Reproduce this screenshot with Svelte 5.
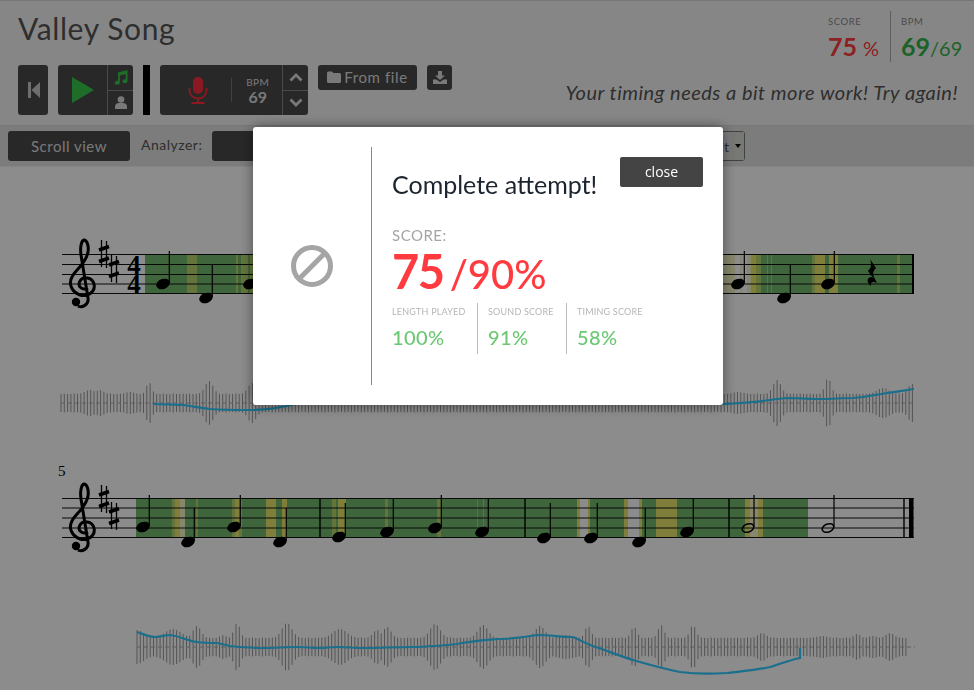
<script>
  const stats = [
    { label: 'LENGTH PLAYED', value: '100%' },
    { label: 'SOUND SCORE', value: '91%' },
    { label: 'TIMING SCORE', value: '58%' }
  ];

  const GREEN = '#73b86d', YEL = '#e8e86c', MID = '#b8d46c', PALE = '#f6f6c8';

  // [x, width, colour]
  const stripes1 = [
    [187, 10, MID], [236, 2, MID], [241, 7, MID], [250, 3, MID],
    [723, 12, PALE], [735, 5, '#ffffff'], [740, 2, PALE], [742, 5, '#ffffff'], [747, 4, PALE], [751, 5, YEL], [756, 5, MID],
    [767, 1, MID], [771, 1, MID], [812, 3, MID], [815, 10, YEL], [829, 9, YEL], [897, 3, MID]
  ];
  const stripes2 = [
    [172, 3, MID], [175, 5, YEL], [180, 5, PALE], [196, 2, MID], [232, 3, MID], [235, 4, YEL], [239, 3, MID],
    [266, 10, YEL], [282, 5, YEL], [332, 4, MID], [338, 8, YEL], [385, 3, MID], [437, 4, MID], [477, 1, MID], [483, 1, MID],
    [577, 3, YEL], [580, 8, '#ffffff'], [588, 2, YEL], [624, 4, YEL], [628, 11, '#ffffff'], [639, 3, YEL],
    [656, 21, YEL], [745, 18, YEL], [750, 8, PALE]
  ];

  // [head x, head y, stem top]
  const notes1 = [[163, 284, 251], [206, 298, 265], [250, 284, 251], [738, 284, 251], [784, 298, 265], [828, 284, 251]];
  const notes2 = [
    [143, 527, 495], [188, 542, 508], [234, 527, 495], [280, 542, 508], [339, 537, 503], [387, 532, 499],
    [435, 528, 495], [482, 532, 499], [544, 538, 503], [591, 538, 503], [639, 542, 508], [687, 532, 498]
  ];
  const halfNotes = [[748, 528, 495], [828, 528, 495]];
  const bars2 = [320, 525, 729];

  function wave(from, to, base, peaks) {
    const out = [];
    for (let x = from; x <= to; x += 3.3) {
      let a = base + Math.sin(x * 0.7) * 0.5;
      for (const [px, amp, w] of peaks) {
        a = Math.max(a, base + (amp - base) * Math.exp(-((x - px) ** 2) / (2 * w * w)));
      }
      out.push({ x: x.toFixed(1), a: a.toFixed(1) });
    }
    return out;
  }

  const wave1 = wave(61, 915, 9, [[90, 13, 5], [100, 13, 4], [130, 11, 4], [149, 21, 2.5], [209, 22, 4], [252, 20, 4],
    [738, 11, 5], [777, 23, 4], [828, 25, 3], [883, 15, 6], [912, 19, 4]]);
  const wave2 = wave(137, 908, 9, [[137, 17, 7], [173, 18, 8], [197, 21, 4], [223, 12, 3], [237, 24, 3], [287, 24, 5], [340, 18, 7],
    [377, 17, 4], [387, 20, 4], [435, 23, 5], [483, 22, 5], [540, 21, 5], [566, 12, 7], [588, 21, 3], [634, 20, 3],
    [661, 22, 3], [693, 22, 3], [762, 14, 4], [822, 11, 5], [857, 13, 3], [873, 11, 4], [890, 14, 4]]);

  const pitch1 = 'M153 404 C165 404.5 175 404.5 183 405 C192 406 200 408 210 409 C225 410 240 410 250 410 C265 410 280 408 295 404 L720 404 C730 404 742 403 753 402 C765 401 775 399 787 398 C800 398 810 399 820 399 C832 399 842 398 853 398 C865 397 875 395 887 393 C897 392 905 390 914 389';
  const pitch2 = 'M137 632 C143 634 149 637 155 637 C161 637 165 635 170 635 C180 636 187 641 197 642 C205 643 211 643 217 643 C222 644 226 645 230 646 C240 647 252 648 263 648 C275 648 286 647 297 647 C305 647 312 648 320 648 C326 648 331 647 337 647 C346 647 354 648 363 648 C380 648 396 647 413 647 C419 647 424 647 430 646 C440 646 448 645 457 644 C470 641 485 640 497 639 C508 639 520 638 537 635 C550 635 562 637 573 637 C580 640 587 644 593 646 C608 651 620 656 633 660 C650 665 665 669 680 672 C695 674 712 674 727 673 C743 671 757 670 770 667 C780 664 790 660 800 658 L800 648';
</script>

<div class="page">
  <header class="top">
    <div class="top-left">
      <h1 class="title">Valley Song</h1>
      <div class="controls">
        <div class="btn skip">
          <svg width="12" height="16" viewBox="0 0 12 16"><path d="M0 0h3v16H0zM12 0v16L3.500 8z" fill="#c8c8c8"/></svg>
        </div>
        <div class="btn group play-group">
          <div class="play-main">
            <svg width="24" height="26" viewBox="0 0 24 26"><path d="M1 0l22 13L1 26z" fill="#38c84c"/></svg>
          </div>
          <div class="side-col">
            <div class="side-cell">
              <svg width="14" height="15" viewBox="0 0 14 15"><path d="M4 2.500L13.500 0v11.300a2.500 2 0 1 1-1.800-1.900V4L5.800 5.500v7.300a2.500 2 0 1 1-1.800-1.900z" fill="#38c84c"/></svg>
            </div>
            <div class="side-cell">
              <svg width="12" height="13" viewBox="0 0 12 13"><circle cx="6" cy="3.500" r="3.300" fill="#ddd"/><path d="M0 13v-2.500C0 8 2 7 4 7h4c2 0 4 1 4 3.500V13z" fill="#ddd"/></svg>
            </div>
          </div>
        </div>
        <div class="black-bar"></div>
        <div class="btn group rec-group">
          <div class="mic">
            <svg width="20" height="27" viewBox="0 0 20 27"><rect x="5" y="0" width="10" height="17" rx="5" fill="#ff2f3c"/><path d="M1.500 11v2.500a8.500 8 0 0 0 17 0V11" fill="none" stroke="#ff2f3c" stroke-width="1.800"/><path d="M10 21.500V25.500M3.500 26h13" stroke="#ff2f3c" stroke-width="1.800" fill="none"/></svg>
          </div>
          <div class="bpm-box">
            <span class="bpm-label">BPM</span>
            <span class="bpm-value">69</span>
          </div>
          <div class="side-col">
            <div class="side-cell">
              <svg width="14" height="9" viewBox="0 0 14 9"><path d="M1.500 7.500L7 2l5.500 5.500" fill="none" stroke="#ddd" stroke-width="2.800"/></svg>
            </div>
            <div class="side-cell">
              <svg width="14" height="9" viewBox="0 0 14 9"><path d="M1.500 1.500L7 7l5.500-5.500" fill="none" stroke="#ddd" stroke-width="2.800"/></svg>
            </div>
          </div>
        </div>
        <div class="btn file">
          <svg width="14" height="12" viewBox="0 0 14 12"><path d="M0 2a1.500 1.500 0 0 1 1.500-1.500H5L6.500 2h6A1.500 1.500 0 0 1 14 3.500v7a1.500 1.500 0 0 1-1.500 1.500h-11A1.500 1.500 0 0 1 0 10.500z" fill="#ddd"/></svg>
          <span>From file</span>
        </div>
        <div class="btn dl">
          <svg width="14" height="13" viewBox="0 0 14 13"><path d="M5 0h4v4.500h3L7 9 2 4.500h3z" fill="#ddd"/><path d="M0 8.500h3.500L7 11l3.500-2.500H14V13H0z" fill="#ddd"/></svg>
        </div>
      </div>
    </div>
    <div class="top-right">
      <div class="scores">
        <div class="score-cell">
          <span class="score-label">SCORE</span>
          <span class="score-value red">75 <small>%</small></span>
        </div>
        <div class="score-cell bpm-cell">
          <span class="score-label">BPM</span>
          <span class="score-value green">69<small>/69</small></span>
        </div>
      </div>
      <p class="message">Your timing needs a bit more work! Try again!</p>
    </div>
  </header>

  <div class="toolbar">
    <div class="tbtn scroll">Scroll view</div>
    <span class="analyzer">Analyzer:</span>
    <div class="tbtn analyzer-btn">Default</div>
    <div class="select"><span class="select-text">Default</span><span class="select-arrow"></span></div>
  </div>

  <svg class="sheet" width="974" height="523" viewBox="0 167 974 523">
    <defs>
      <g id="clef">
        <path d="M88 288C82 291 77 286 80 281C83 276 92 277 94 284C96 293 86 297 80 295C72 292 68 284 72 277C75 270 86 264 88 252C89 246 87 240 84 240C81 241 80 248 81 255L88 298C89 305 82 308 78 306" fill="none" stroke="#000" stroke-width="3"/>
        <circle cx="76" cy="302" r="4.200" fill="#000"/>
      </g>
      <g id="sharp">
        <path d="M-2.500-14V13M2.500-13V14" stroke="#000" stroke-width="1.300"/>
        <path d="M-5-4L5-7.500M-5 7.500L5 4" stroke="#000" stroke-width="3.600"/>
      </g>
    </defs>

    <!-- first staff -->
    <rect x="145" y="254" width="769" height="40" fill={GREEN}/>
    {#each stripes1 as [x, w, c]}
      <rect {x} y="254" width={w} height="40" fill={c}/>
    {/each}
    {#each [254.5, 264.5, 274.5, 284, 293.5] as y}
      <line x1="62" x2="914" y1={y} y2={y} stroke="#111" stroke-width="1"/>
    {/each}
    <use href="#clef"/>
    <use href="#sharp" x="104" y="254"/>
    <use href="#sharp" x="114" y="269"/>
    <text class="timesig" x="134" y="274">4</text>
    <text class="timesig" x="134" y="293">4</text>
    {#each notes1 as [x, y, top]}
      <ellipse cx={x} cy={y} rx="7" ry="5" transform="rotate(-22 {x} {y})" fill="#000"/>
      <line x1={x + 6.3} x2={x + 6.3} y1={y - 1} y2={top} stroke="#000" stroke-width="1.200"/>
    {/each}
    <path d="M870 259L876 268C873 271 872 274 875 279L877 283C873 281 870 282 871 286C867 283 866 278 871 277L873 278L868 271C871 268 872 265 870 259z" fill="#000"/>
    <line x1="913" x2="913" y1="254" y2="294" stroke="#000" stroke-width="2"/>

    {#each wave1 as b}
      <line x1={b.x} x2={b.x} y1={403 - b.a} y2={403 + +b.a} stroke="#999" stroke-width="1"/>
    {/each}
    <line x1="61" x2="915" y1="403" y2="403" stroke="#aaa" stroke-dasharray="4 3"/>
    <path d={pitch1} fill="none" stroke="#2fcaff" stroke-width="2.200"/>

    <!-- second staff -->
    <text class="measure" x="58" y="476">5</text>
    <rect x="136" y="498" width="672" height="40" fill={GREEN}/>
    {#each stripes2 as [x, w, c]}
      <rect {x} y="498" width={w} height="40" fill={c}/>
    {/each}
    {#each [498.5, 508, 518, 528, 537.500] as y}
      <line x1="62" x2="914" y1={y} y2={y} stroke="#111" stroke-width="1"/>
    {/each}
    <use href="#clef" y="244"/>
    <use href="#sharp" x="104" y="499"/>
    <use href="#sharp" x="114" y="516"/>
    {#each notes2 as [x, y, top]}
      <ellipse cx={x} cy={y} rx="7" ry="5" transform="rotate(-22 {x} {y})" fill="#000"/>
      <line x1={x + 6.3} x2={x + 6.3} y1={y - 1} y2={top} stroke="#000" stroke-width="1.200"/>
    {/each}
    {#each halfNotes as [x, y, top]}
      <ellipse cx={x} cy={y} rx="6" ry="4" transform="rotate(-22 {x} {y})" fill="none" stroke="#000" stroke-width="1.500"/>
      <line x1={x + 6} x2={x + 6} y1={y - 1} y2={top} stroke="#000" stroke-width="1.200"/>
    {/each}
    {#each bars2 as x}
      <line x1={x} x2={x} y1="498" y2="538" stroke="#000" stroke-width="1.400"/>
    {/each}
    <line x1="904" x2="904" y1="498" y2="538" stroke="#000" stroke-width="1.400"/>
    <rect x="909" y="498" width="4.500" height="40" fill="#000"/>

    {#each wave2 as b}
      <line x1={b.x} x2={b.x} y1={647 - b.a} y2={647 + +b.a} stroke="#999" stroke-width="1"/>
    {/each}
    <line x1="137" x2="915" y1="647" y2="647" stroke="#aaa" stroke-dasharray="4 3"/>
    <path d={pitch2} fill="none" stroke="#2fcaff" stroke-width="2.200"/>
  </svg>
</div>

<div class="overlay">
  <div class="modal">
    <div class="modal-icon">
      <svg width="42" height="42" viewBox="0 0 42 42"><circle cx="21" cy="21" r="18.500" fill="none" stroke="#a5a5a5" stroke-width="5"/><path d="M9 33L33 9" stroke="#a5a5a5" stroke-width="5"/></svg>
    </div>
    <div class="modal-body">
      <div class="modal-head">
        <h2 class="modal-title">Complete attempt!</h2>
        <button class="close">close</button>
      </div>
      <div class="modal-score-label">SCORE:</div>
      <div class="modal-score"><b>75</b> <span>/90%</span></div>
      <div class="stats">
        {#each stats as s}
          <div class="stat">
            <span class="stat-label">{s.label}</span>
            <span class="stat-value">{s.value}</span>
          </div>
        {/each}
      </div>
    </div>
  </div>
</div>

<style>
  :global(body) {
    margin: 0;
    background: #fff;
    font-family: Lato, "Open Sans", sans-serif;
    overflow: hidden;
  }

  .page {
    width: 974px;
    height: 690px;
    overflow: hidden;
  }

  .top {
    box-sizing: border-box;
    height: 125px;
    background: #f5f5f5;
    border-top: 1px solid #d8d8d8;
    display: flex;
    justify-content: space-between;
    padding: 0 16px 0 18px;
  }

  .title {
    margin: 9px 0 0;
    font-size: 30px;
    font-weight: 400;
    line-height: 36px;
    color: #555;
    letter-spacing: 0.6px;
  }

  .controls {
    display: flex;
    align-items: flex-start;
    gap: 10px;
    margin-top: 19px;
  }

  .btn {
    box-sizing: border-box;
    background: #4a4a4a;
    border-radius: 3px;
    color: #ddd;
    display: flex;
    align-items: center;
    justify-content: center;
  }

  .skip { width: 30px; height: 50px; padding-left: 2px; }
  .group { height: 50px; align-items: stretch; justify-content: flex-start; }
  .play-group { width: 75px; }
  .play-main { width: 49px; display: flex; align-items: center; justify-content: center; }

  .side-col {
    width: 25px;
    border-left: 1px solid #888;
    display: flex;
    flex-direction: column;
  }

  .side-cell {
    flex: 1;
    display: flex;
    align-items: center;
    justify-content: center;
  }

  .side-cell + .side-cell { border-top: 1px solid #888; }

  .black-bar { width: 7px; height: 50px; background: #000; }

  .rec-group { width: 148px; }
  .mic {
    box-sizing: border-box;
    width: 72px;
    padding-left: 4px;
    display: flex;
    align-items: center;
    justify-content: center;
  }

  .bpm-box {
    width: 50px;
    margin: 13px 0;
    border-left: 1px solid #777;
    display: flex;
    flex-direction: column;
    align-items: center;
    justify-content: center;
    color: #ddd;
    padding-left: 1px;
  }

  .bpm-label { font-size: 10px; line-height: 12px; letter-spacing: 0.3px; }
  .bpm-value { font-size: 16px; font-weight: 700; line-height: 17px; }

  .file {
    width: 99px;
    height: 25px;
    gap: 3px;
    font-size: 15px;
    letter-spacing: 0.6px;
    padding-bottom: 1px;
  }

  .dl { width: 25px; height: 25px; }

  .top-right {
    display: flex;
    flex-direction: column;
    align-items: flex-end;
  }

  .scores {
    display: flex;
    margin-top: 10px;
    height: 51px;
  }

  .score-cell {
    width: 62px;
    display: flex;
    flex-direction: column;
  }

  .bpm-cell {
    width: 57px;
    border-left: 1px solid #aaa;
    padding-left: 10px;
  }

  .score-label {
    font-size: 9.500px;
    color: #888;
    letter-spacing: 0.6px;
    line-height: 11px;
    margin-top: 5px;
  }

  .score-value {
    font-size: 25px;
    font-weight: 700;
    line-height: 30px;
    margin-top: 4px;
    white-space: nowrap;
  }

  .score-value small { font-size: 20px; font-weight: 400; }
  .red { color: #ff3b40; }
  .green { color: #36b44a; }

  .message {
    margin: 18px 0 0;
    font-size: 20px;
    line-height: 24px;
    font-style: italic;
    color: #555;
    letter-spacing: 0.5px;
    white-space: nowrap;
  }

  .toolbar {
    box-sizing: border-box;
    height: 42px;
    background: #e2e2e2;
    border-top: 1px solid #dadada;
    border-bottom: 1px solid #f0f0f0;
    display: flex;
    align-items: center;
    padding: 0 229px 0 8px;
  }

  .tbtn {
    box-sizing: border-box;
    height: 30px;
    background: #4a4a4a;
    border-radius: 3px;
    color: #ddd;
    font-size: 15px;
    letter-spacing: 0.5px;
    display: flex;
    align-items: center;
    justify-content: center;
  }

  .scroll { width: 122px; }

  .analyzer {
    margin: 0 0 3px 11px;
    font-size: 14px;
    color: #555;
    letter-spacing: 0.5px;
    width: 71px;
  }

  .analyzer-btn { width: 150px; }

  .select {
    box-sizing: border-box;
    margin-left: auto;
    width: 175px;
    height: 30px;
    border: 1px solid #777;
    border-radius: 3px;
    display: flex;
    justify-content: flex-end;
    align-items: center;
    font-size: 14px;
    color: #555;
  }

  .select-text { padding-right: 1px; }

  .select-arrow {
    width: 13px;
    height: 100%;
    background: #d8dcd4;
    display: flex;
    align-items: center;
    justify-content: center;
    margin-left: 1px;
  }

  .select-arrow::after {
    content: "";
    border: 3.500px solid transparent;
    border-top: 4px solid #000;
    border-bottom: 0;
  }

  .sheet { display: block; }

  .timesig {
    font-family: "Liberation Serif", serif;
    font-weight: 700;
    font-size: 27px;
    text-anchor: middle;
    fill: #000;
  }

  .measure {
    font-family: "Liberation Serif", serif;
    font-size: 15px;
    fill: #000;
  }

  .overlay {
    position: fixed;
    inset: 0;
    background: rgba(0, 0, 0, 0.45);
  }

  .modal {
    position: absolute;
    left: 253px;
    top: 127px;
    box-sizing: border-box;
    width: 470px;
    height: 278px;
    background: #fff;
    border-radius: 3px;
    box-shadow: 0 0 14px rgba(0, 0, 0, 0.45);
    padding: 20px 20px 20px 0;
    display: flex;
  }

  .modal-icon {
    width: 119px;
    flex: none;
    border-right: 1px solid #888;
    display: flex;
    align-items: center;
    justify-content: center;
    box-sizing: border-box;
  }

  .modal-body { flex: 1; padding-left: 20px; }

  .modal-head {
    display: flex;
    justify-content: space-between;
    align-items: flex-start;
    padding-top: 10px;
  }

  .modal-title {
    margin: 12px 0 0;
    font-size: 25px;
    font-weight: 400;
    line-height: 30px;
    color: #1c2430;
  }

  .close {
    width: 83px;
    height: 30px;
    border: 0;
    border-radius: 2px;
    background: #444;
    color: #fff;
    font-family: "Open Sans", sans-serif;
    font-size: 14px;
    padding: 0 0 2px;
  }

  .modal-score-label {
    margin-top: 27px;
    font-size: 15px;
    line-height: 18px;
    color: #a5a5a5;
    letter-spacing: 0.5px;
  }

  .modal-score {
    margin-top: 5px;
    color: #ff3b40;
    line-height: 44px;
    white-space: nowrap;
  }

  .modal-score b { font-size: 47px; font-weight: 700; letter-spacing: -1.5px; }
  .modal-score span { font-size: 40px; font-weight: 500; margin-left: 2px; }

  .stats {
    display: flex;
    margin-top: -2px;
    height: 51px;
  }

  .stat {
    display: flex;
    flex-direction: column;
    padding: 0 10px;
    border-left: 1px solid #bbb;
  }

  .stat:first-child { padding-left: 0; border-left: 0; width: 75px; padding-right: 10px; }
  .stat:nth-child(2) { width: 68px; }

  .stat-label {
    font-size: 9px;
    line-height: 11px;
    margin-top: 3px;
    color: #b5b5b5;
    letter-spacing: 0.2px;
    white-space: nowrap;
  }

  .stat-value {
    font-size: 20px;
    font-weight: 500;
    line-height: 24px;
    margin-top: 8px;
    color: #6cc873;
    letter-spacing: 0.4px;
  }
</style>
